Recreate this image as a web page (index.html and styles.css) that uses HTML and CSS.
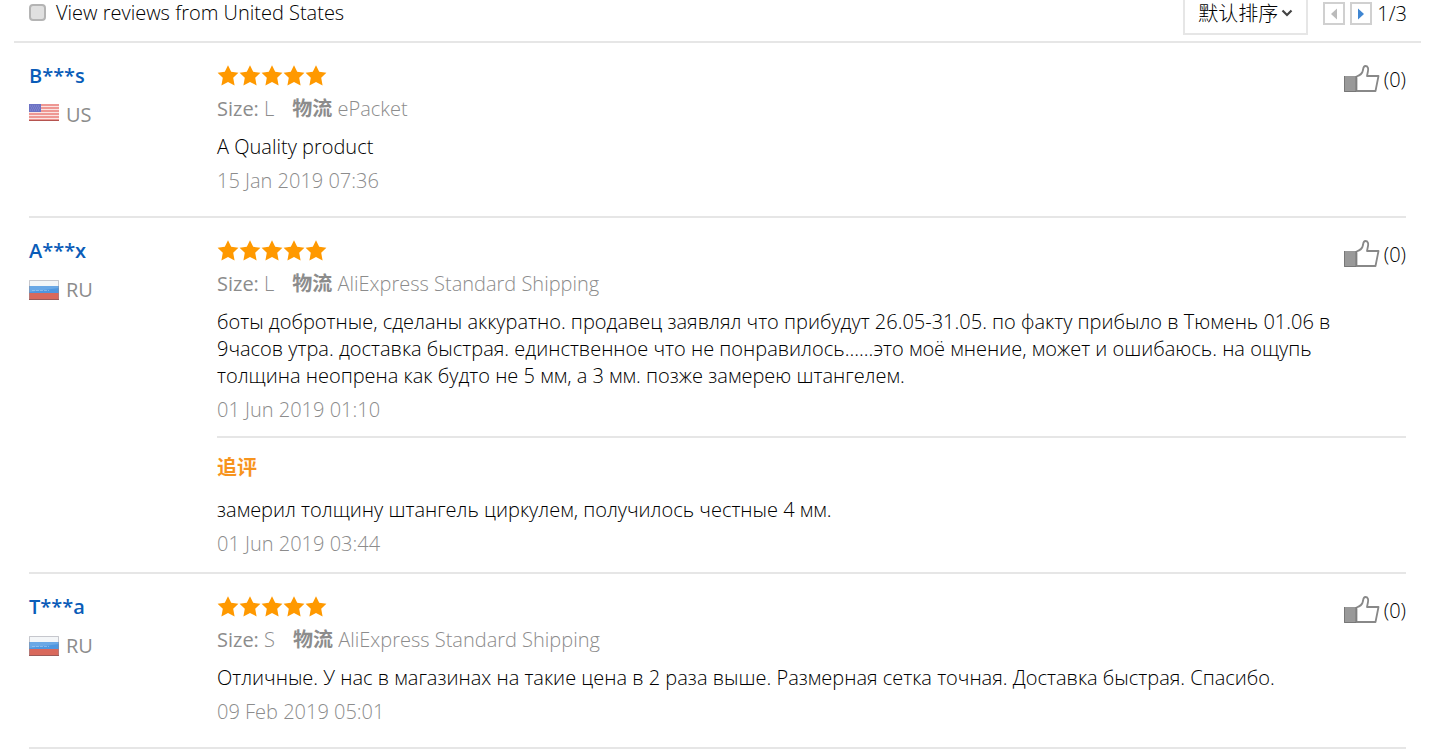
FILE: index.html
```html
<!DOCTYPE html>
<html lang="en">

<head>
    <meta charset="UTF-8" />
    <meta name="viewport" content="width=device-width, initial-scale=1.0"/>
    <title>Reviews</title>
    <link rel="stylesheet" href="styles.css">
</head>

<body>

    <!-- shared icons -->
    <svg class="sprite" aria-hidden="true">
        <symbol id="star" viewBox="0 0 22 22">
            <path d="M11 0.2 L14.2 6.8 L21.4 7.7 L16.2 12.8 L17.6 20.4 L11 17 L4.4 20.4 L5.8 12.8 L0.6 7.7 L7.8 6.8 Z"/>
        </symbol>
        <symbol id="stars" viewBox="0 0 112 22">
            <use href="#star" width="22" height="22"/>
            <use href="#star" x="22" width="22" height="22"/>
            <use href="#star" x="44" width="22" height="22"/>
            <use href="#star" x="66" width="22" height="22"/>
            <use href="#star" x="88" width="22" height="22"/>
        </symbol>
        <symbol id="thumb" viewBox="0 0 36 28">
            <path d="M12.5 11.5 C16 10.5 18.5 8 19 5 C19.2 2.5 19.5 1 21.5 1 C24 1 24.5 3.5 24 6 L23 11 H34.5 L31.5 26 H12.5 Z" fill="#fff" stroke="#888" stroke-width="1.8" stroke-linejoin="round"/>
            <rect x="0" y="11" width="12" height="16" fill="#999"/>
            <path d="M0.5 11 V26.5 H12 V11" fill="none" stroke="#777"/>
        </symbol>
        <symbol id="flag-us" viewBox="0 0 30 17">
            <rect width="30" height="17" fill="#fbe3e1"/>
            <path d="M0 1 H30 M0 4 H30 M0 7 H30 M0 10 H30 M0 13 H30 M0 16 H30" stroke="#ea7f79" stroke-width="1.6"/>
            <rect width="12" height="8" fill="#6c72c4"/>
            <path d="M1 2 H11 M2 4 H11 M1 6 H11" stroke="#8b90d4" stroke-width="1" stroke-dasharray="1 1"/>
            <path d="M0 16.5 H30" stroke="#b5534f"/>
        </symbol>
        <symbol id="flag-ru" viewBox="0 0 30 20">
            <rect width="30" height="20" fill="#f4f6f8"/>
            <rect y="6" width="30" height="8" fill="#4f96df"/>
            <rect y="13" width="30" height="7" fill="#d9695c"/>
            <path d="M0 6 H30 V8 L0 12 Z" fill="#6aa8e6"/>
            <path d="M3 10.5 H20" stroke="#a9cdf2" stroke-opacity="0.6" stroke-dasharray="3 1"/>
            <path d="M0.5 0.5 H29.5 V19.5 H0.5 Z" fill="none" stroke="#8d8d99" stroke-opacity="0.45"/>
            <path d="M0 19.5 H30" stroke="#9c5a58"/>
        </symbol>
    </svg>

    <div class="toolbar">
        <label class="filter">
            <input type="checkbox">
            View reviews from United States
        </label>
        <div class="tools">
            <div class="sort">
                <select aria-label="Sort">
                    <option>默认排序</option>
                </select>
                <svg class="caret" viewBox="0 0 12 8"><path d="M1.5 1.5 L6 6 L10.5 1.5" fill="none" stroke="#444" stroke-width="2.2"/></svg>
            </div>
            <div class="pager">
                <button aria-label="Previous" disabled><svg viewBox="0 0 8 12"><path d="M7 0.5 V11.5 L1 6 Z" fill="#bbb"/></svg></button>
                <button aria-label="Next"><svg viewBox="0 0 8 12"><path d="M1 0.5 V11.5 L7 6 Z" fill="#3f86d2"/></svg></button>
                <span>1/3</span>
            </div>
        </div>
    </div>

    <div class="reviews">
        <div class="review">
            <div class="user">
                <a href="#" class="name">B***s</a>
                <div class="country"><svg class="flag flag-us"><use href="#flag-us"/></svg>US</div>
            </div>
            <div class="content">
                <div class="review-head">
                    <svg class="stars"><use href="#stars"/></svg>
                    <button class="helpful" aria-label="Helpful"><svg><use href="#thumb"/></svg>(0)</button>
                </div>
                <div class="meta">
                    <span><b>Size:</b> L</span>
                    <span><b class="cjk">物流</b> ePacket</span>
                </div>
                <p class="text">A Quality product</p>
                <div class="date">15 Jan 2019 07:36</div>
            </div>
        </div>

        <div class="review has-followup">
            <div class="user">
                <a href="#" class="name">A***x</a>
                <div class="country"><svg class="flag flag-ru"><use href="#flag-ru"/></svg>RU</div>
            </div>
            <div class="content">
                <div class="review-head">
                    <svg class="stars"><use href="#stars"/></svg>
                    <button class="helpful" aria-label="Helpful"><svg><use href="#thumb"/></svg>(0)</button>
                </div>
                <div class="meta">
                    <span><b>Size:</b> L</span>
                    <span><b class="cjk">物流</b> AliExpress Standard Shipping</span>
                </div>
                <p class="text" lang="ru">боты добротные, сделаны аккуратно. продавец заявлял что прибудут 26.05-31.05. по факту прибыло в Тюмень 01.06 в 9часов утра. доставка быстрая. единственное что не понравилось......это моё мнение, может и ошибаюсь. на ощупь толщина неопрена как будто не 5 мм, а 3 мм. позже замерею штангелем.</p>
                <div class="date">01 Jun 2019 01:10</div>
                <div class="followup">
                    <div class="followup-title">追评</div>
                    <p class="text" lang="ru">замерил толщину штангель циркулем, получилось честные 4 мм.</p>
                    <div class="date">01 Jun 2019 03:44</div>
                </div>
            </div>
        </div>

        <div class="review">
            <div class="user">
                <a href="#" class="name">T***a</a>
                <div class="country"><svg class="flag flag-ru"><use href="#flag-ru"/></svg>RU</div>
            </div>
            <div class="content">
                <div class="review-head">
                    <svg class="stars"><use href="#stars"/></svg>
                    <button class="helpful" aria-label="Helpful"><svg><use href="#thumb"/></svg>(0)</button>
                </div>
                <div class="meta">
                    <span><b>Size:</b> S</span>
                    <span><b class="cjk">物流</b> AliExpress Standard Shipping</span>
                </div>
                <p class="text" lang="ru">Отличные. У нас в магазинах на такие цена в 2 раза выше. Размерная сетка точная. Доставка быстрая. Спасибо.</p>
                <div class="date">09 Feb 2019 05:01</div>
            </div>
        </div>
    </div>

</body>

</html>
```
FILE: styles.css
```css
:root {
    --text: #000;
    --muted: #8c8c8c;
    --line: #e6e6e6;
    --link: #0a5cb8;
    --orange: #ff9900;
}

* {
    box-sizing: border-box;
}

body {
    margin: 0;
    padding: 0 12px 0 14px;
    background: #fff;
    color: var(--text);
    font-family: "Open Sans", "Noto Sans CJK SC", sans-serif;
    font-size: 20px;
    font-weight: 300;
    line-height: 27px;
}

button,
select {
    font: inherit;
    color: inherit;
    background: none;
    border: none;
    padding: 0;
    cursor: pointer;
}

svg {
    display: block;
}

.sprite {
    display: none;
}

.toolbar {
    display: flex;
    justify-content: space-between;
    align-items: flex-start;
    padding: 0 14px 6px 15px;
    border-bottom: 2px solid var(--line);
}

.filter {
    display: flex;
    align-items: center;
    gap: 10px;
    line-height: 25px;
}

.filter input {
    appearance: none;
    width: 17px;
    height: 17px;
    margin: 0;
    border: 2px solid #b4b4b4;
    border-radius: 4px;
    background: #e0e0e0;
}

.tools {
    display: flex;
    gap: 15px;
}

/* the top edge of the sort box runs off the page */
.sort {
    display: grid;
    align-items: center;
    margin-top: -9px;
}

.sort select,
.sort .caret {
    grid-area: 1 / 1;
}

.sort select {
    appearance: none;
    width: 125px;
    height: 44px;
    padding: 0 13px;
    border: 2px solid var(--line);
}

.caret {
    justify-self: end;
    width: 12px;
    height: 8px;
    margin-right: 15px;
    pointer-events: none;
}

.pager {
    display: flex;
    align-items: center;
    gap: 5px;
    height: 27px;
}

.pager button {
    display: flex;
    align-items: center;
    justify-content: center;
    width: 22px;
    height: 23px;
    border: 2px solid #d0d0d0;
}

.pager svg {
    width: 8px;
    height: 12px;
}

.reviews {
    padding: 0 15px;
}

.review {
    display: flex;
    padding: 22px 0;
    border-bottom: 2px solid var(--line);
}

.review.has-followup {
    padding-bottom: 15px;
}

.user {
    flex: 0 0 188px;
}

.name {
    display: block;
    line-height: 22px;
    color: var(--link);
    font-weight: 600;
    text-decoration: none;
}

.country {
    display: flex;
    align-items: center;
    gap: 7px;
    margin-top: 14px;
    color: var(--muted);
    font-weight: 400;
}

.flag {
    width: 30px;
    height: 20px;
}

.flag-us {
    height: 17px;
    margin-bottom: 4px;
}

.content {
    flex: 1;
}

.review-head {
    display: flex;
    justify-content: space-between;
    align-items: flex-start;
    height: 30px;
}

.stars {
    width: 112px;
    height: 22px;
    fill: var(--orange);
}

.helpful {
    display: flex;
    align-items: center;
    gap: 4px;
}

.helpful svg {
    width: 36px;
    height: 28px;
}

.meta {
    display: flex;
    gap: 18px;
    color: var(--muted);
}

.meta b {
    font-weight: 400;
}

.meta .cjk {
    font-weight: 700;
}

.text {
    margin: 11px 0 7px;
    padding-right: 48px;
}

.date {
    color: var(--muted);
}

.followup {
    margin-top: 13px;
    padding-top: 16px;
    border-top: 2px solid var(--line);
}

.followup-title {
    color: #f7941d;
    font-weight: 700;
}

.followup .text {
    margin-top: 15px;
}
```
